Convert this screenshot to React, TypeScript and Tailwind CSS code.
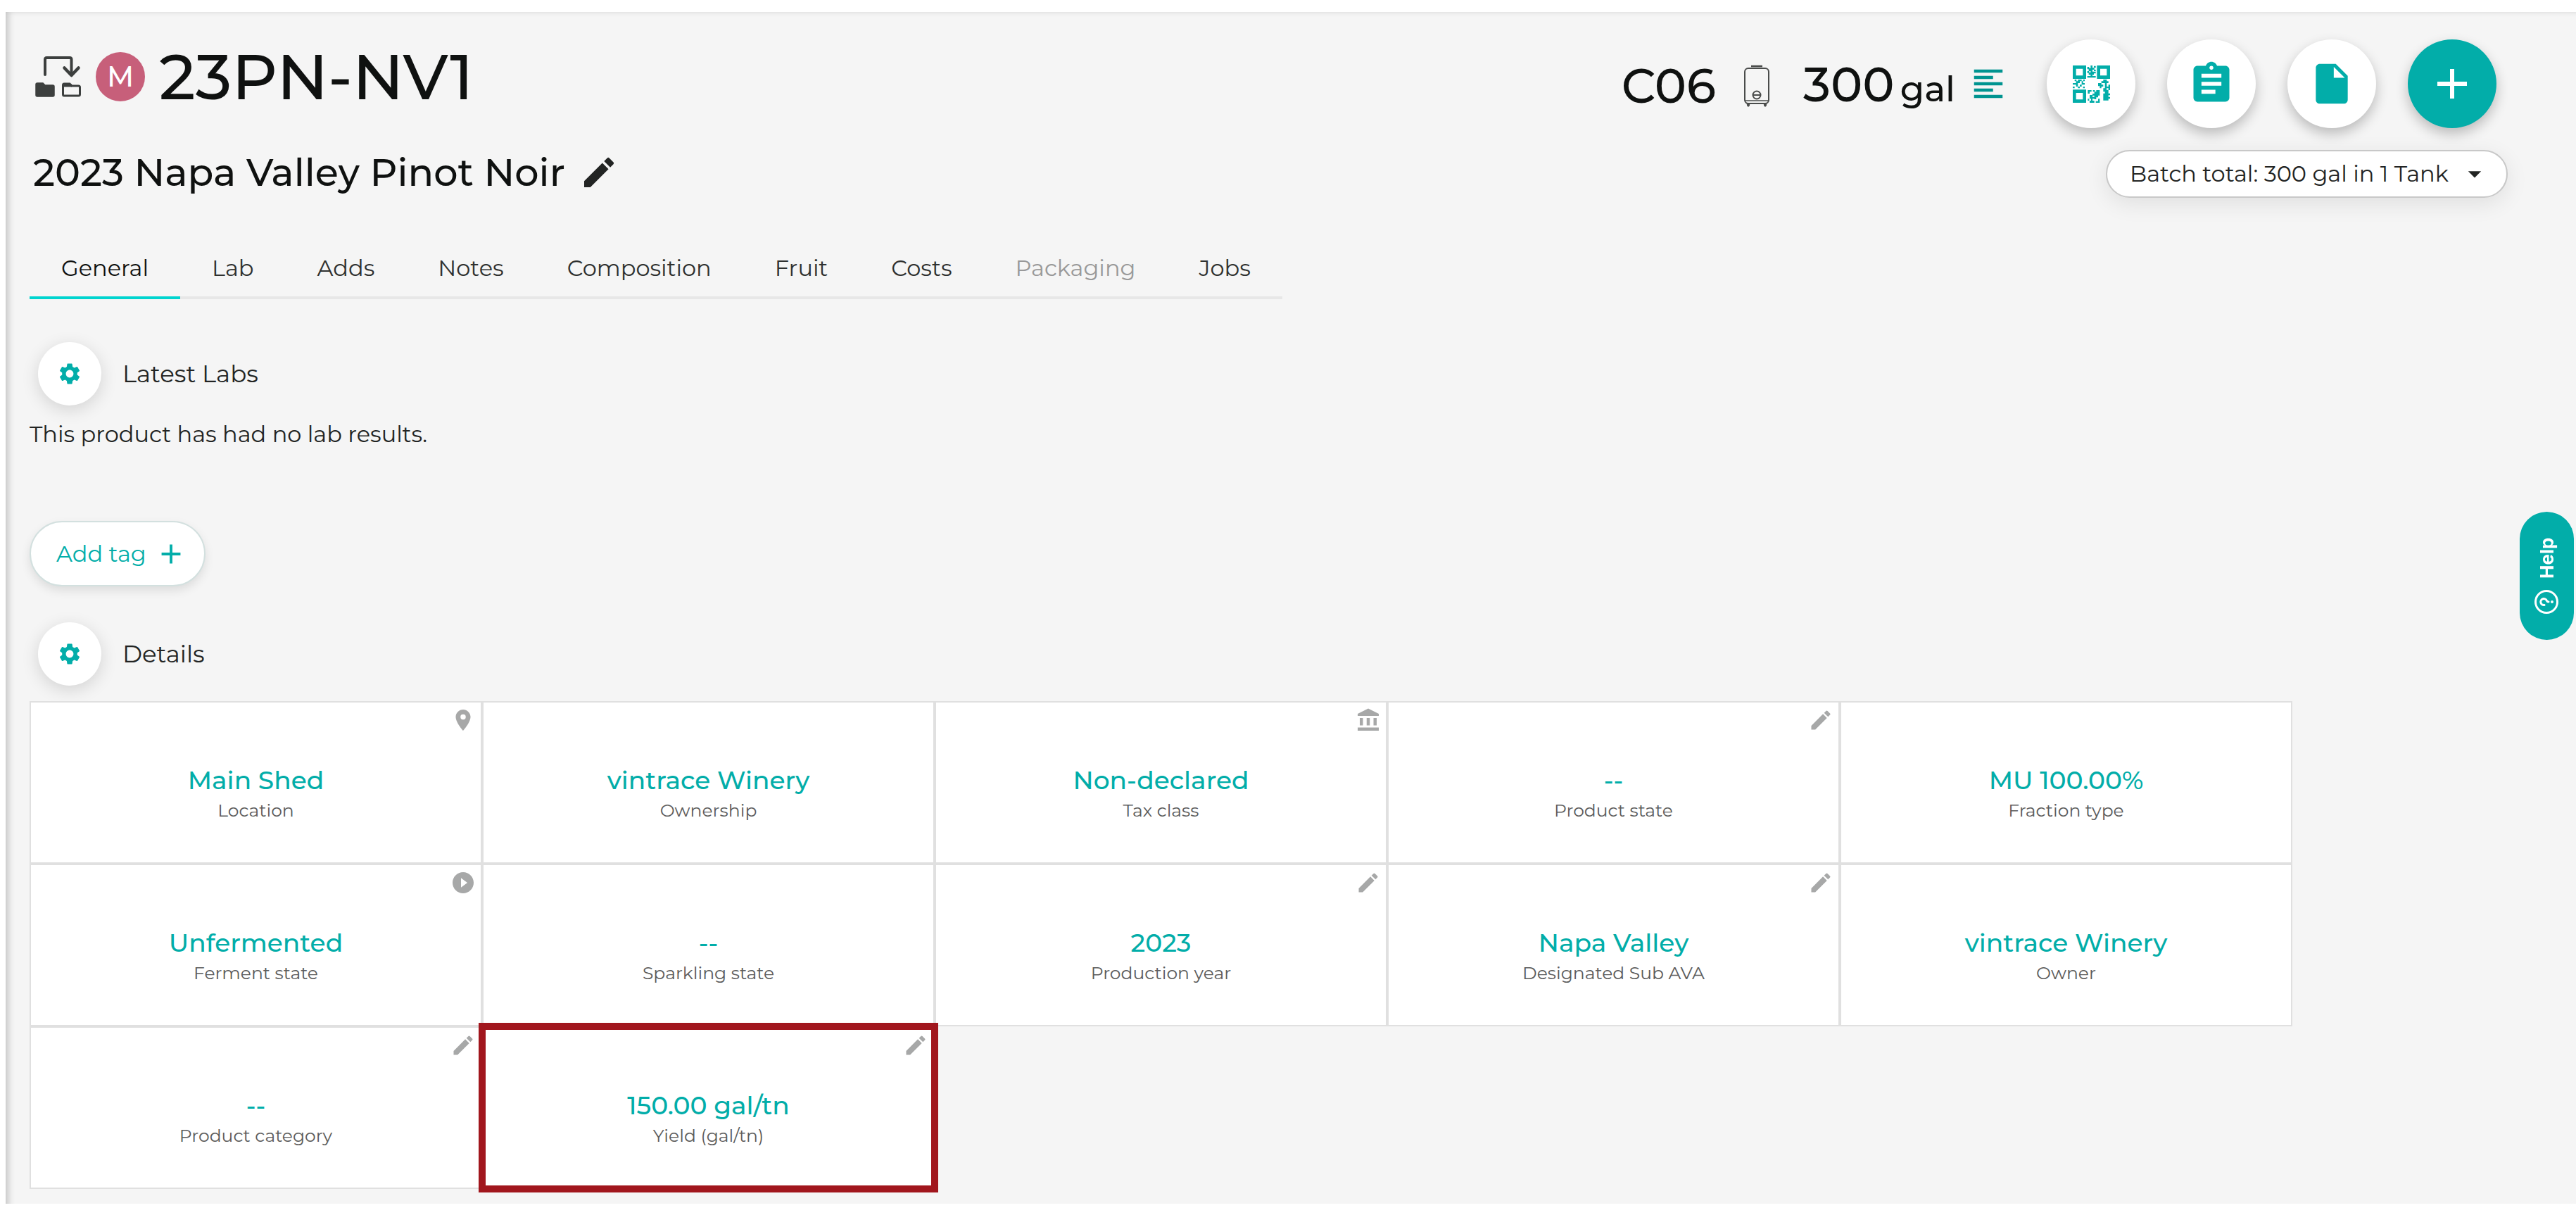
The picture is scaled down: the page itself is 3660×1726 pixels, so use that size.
import type { ReactNode } from "react";
import {
  MdAccountBalance,
  MdAdd,
  MdArrowDropDown,
  MdAssignment,
  MdEdit,
  MdFormatAlignLeft,
  MdInsertDriveFile,
  MdPlace,
  MdPlayCircleFilled,
  MdSettings,
} from "react-icons/md";

type Tile = { value: string; label: string; icon?: ReactNode; highlighted?: boolean };

const pencil = <MdEdit className="size-9" />;

const tiles: Tile[] = [
  { value: "Main Shed", label: "Location", icon: <MdPlace className="size-9" /> },
  { value: "vintrace Winery", label: "Ownership" },
  { value: "Non-declared", label: "Tax class", icon: <MdAccountBalance className="size-9" /> },
  { value: "--", label: "Product state", icon: pencil },
  { value: "MU 100.00%", label: "Fraction type" },
  { value: "Unfermented", label: "Ferment state", icon: <MdPlayCircleFilled className="size-9" /> },
  { value: "--", label: "Sparkling state" },
  { value: "2023", label: "Production year", icon: pencil },
  { value: "Napa Valley", label: "Designated Sub AVA", icon: pencil },
  { value: "vintrace Winery", label: "Owner" },
  { value: "--", label: "Product category", icon: pencil },
  { value: "150.00 gal/tn", label: "Yield (gal/tn)", icon: pencil, highlighted: true },
];

const tabs = ["General", "Lab", "Adds", "Notes", "Composition", "Fruit", "Costs", "Packaging", "Jobs"];

function TransferIcon() {
  return (
    <svg viewBox="0 0 66 60" className="h-[60px] w-[66px] shrink-0" fill="none" stroke="#3c3f3e">
      <path d="M14 27V5.500Q14 3 16.500 3H49Q51.500 3 51.500 5.500V27" strokeWidth="4" strokeLinecap="round" />
      <path d="M41.500 17.500 51.500 28 61.500 17.500" strokeWidth="4.500" strokeLinecap="round" strokeLinejoin="round" />
      <path d="M3 39H11L14 42H25Q27 42 27 44V56Q27 58 25 58H3Q1 58 1 56V41Q1 39 3 39Z" fill="#3c3f3e" strokeWidth="1.500" />
      <path d="M41 40H49L52 43H61.500Q63.500 43 63.500 45V55Q63.500 57 61.500 57H41Q39.500 57 39.500 55V42Q39.500 40 41 40Z" strokeWidth="3" />
      <path d="M39 42.500H52" strokeWidth="4" />
    </svg>
  );
}

function TankIcon() {
  return (
    <svg viewBox="0 0 36 60" className="h-[60px] w-9 shrink-0" fill="none" stroke="#4a4c4b" strokeWidth="2">
      <path d="M10 2H26" strokeWidth="2.500" />
      <rect x="1" y="5" width="34" height="50" rx="5" />
      <path d="M1 51H35" strokeWidth="1.500" />
      <path d="M4 55H8L7 59H5ZM28 55H32L31 59H29Z" fill="#4a4c4b" strokeWidth="1" />
      <circle cx="18" cy="43" r="5.500" />
      <path d="M12 43H24" />
    </svg>
  );
}

function QrIcon() {
  return (
    <svg viewBox="0 0 159 159" className="size-[53px]" fill="currentColor">
      <path fillRule="evenodd" d="M0 0H57V57H0ZM14 14V43H43V14ZM103 0H159V57H103ZM117 14V43H145V14ZM0 103H57V159H0ZM14 117V145H43V117Z" />
      <path d="M76 0H84V10H92V18H84V26H98V34H90V40H84V45H98V52H62V45H76V40H68V32H62V24H70V30H76V24H68V16H62V6H70V12H76Z" />
      <path d="M90 2H98V10H90ZM90 18H98V24H90Z" />
      <path d="M8 60H16V67H8ZM22 60H38V67H30V75H22V90H14V82H0V75H14V67H22ZM0 90H8V97H0ZM44 60H51V67H44ZM38 67H44V75H51V82H38ZM30 82H38V90H30ZM22 90H30V97H22ZM44 90H51V97H44Z" />
      <path d="M130 60H145V67H152V75H145V82H137V75H122V67H130ZM108 75H122V82H130V90H122V97H115V88H108ZM137 82H145V90H159V105H152V97H144V104H152V119H159V127H152V134H159V142H152V149H130V119H137V112H130V97H137ZM152 82H159V90H152Z" />
      <path d="M64 105H80V112H72V120H64ZM86 105H94V112H86ZM100 105H115V128H108V136H100V144H92V128H84V120H92V112H100ZM72 126H84V134H92V142H84V150H92V159H72V150H78V142H72ZM64 142H70V150H64ZM98 152H115V159H98ZM108 142H115V152H108Z" />
    </svg>
  );
}

function RoundButton({ label, primary, children }: { label: string; primary?: boolean; children: ReactNode }) {
  return (
    <button
      type="button"
      aria-label={label}
      className={
        primary
          ? "flex size-[126px] items-center justify-center rounded-full bg-[#02ada9] text-white shadow-[0_8px_18px_rgba(0,0,0,0.24)]"
          : "flex size-[126px] items-center justify-center rounded-full bg-white text-[#02ada9] shadow-[0_8px_18px_rgba(0,0,0,0.24)]"
      }
    >
      {children}
    </button>
  );
}

function SectionHeading({ title }: { title: string }) {
  return (
    <div className="ml-3 flex items-center gap-[30px]">
      <button
        type="button"
        aria-label={`${title} settings`}
        className="flex size-[90px] items-center justify-center rounded-full bg-white text-[#02ada9] shadow-[0_6px_24px_rgba(0,0,0,0.14)]"
      >
        <MdSettings className="size-9" />
      </button>
      <h2 className="text-[34px] leading-10 text-[#222423]">{title}</h2>
    </div>
  );
}

function DetailTile({ value, label, icon, highlighted }: Tile) {
  return (
    <div className="relative border-2 border-[#e0e0e0] bg-white pt-[86px] pb-[55px] text-center">
      <div className="text-[36px] leading-[48px] font-medium text-[#02ada9]">{value}</div>
      <div className="text-[25px] leading-[38px] text-[#5c5c5c]">{label}</div>
      {icon && (
        <button type="button" aria-label={`Edit ${label}`} className="absolute top-[7px] right-[7px] text-[#a7a8a8]">
          {icon}
        </button>
      )}
      {highlighted && <div className="pointer-events-none absolute -inset-[7px] z-10 border-[10px] border-[#a1161d]" />}
    </div>
  );
}

export default function App() {
  return (
    <div className="bg-white pt-[17px] pb-[15px] pl-2 font-[Montserrat,Inter,sans-serif] text-[#0f1110]">
      <main className="bg-[#f5f5f5] pt-[39px] pr-[97px] pb-[21px] pl-[34px] shadow-[inset_10px_4px_10px_-6px_rgba(0,0,0,0.2)]">
        <header className="flex items-start justify-between">
          <div>
            <div className="ml-2 flex h-[106px] items-center">
              <TransferIcon />
              <span className="ml-5 flex size-[70px] items-center justify-center rounded-full bg-[#c75f7a] text-[40px] font-medium text-white">
                M
              </span>
              <h1 className="ml-5 text-[90px] leading-[106px] font-medium">23PN-NV1</h1>
            </div>
            <div className="mt-[49px] ml-[5px] flex h-[68px] items-center gap-5">
              <p className="text-[54px] leading-[68px] font-medium">2023 Napa Valley Pinot Noir</p>
              <button type="button" aria-label="Edit name" className="text-[#222423]">
                <MdEdit className="size-14" />
              </button>
            </div>
          </div>

          <div className="flex flex-col items-end">
            <div className="mr-4 flex items-center">
              <div className="flex items-center pt-1.5 font-medium">
                <span className="text-[68px] leading-[80px]">C06</span>
                <span className="ml-10">
                  <TankIcon />
                </span>
                <span className="ml-12 flex items-baseline gap-2">
                  <span className="text-[68px] leading-[80px]">300</span>
                  <span className="text-[50px]">gal</span>
                </span>
              </div>
              <button type="button" aria-label="Show list" className="ml-5 text-[#009490]">
                <MdFormatAlignLeft className="size-[54px]" />
              </button>
              <div className="ml-14 flex gap-[45px]">
                <RoundButton label="QR code">
                  <QrIcon />
                </RoundButton>
                <RoundButton label="Tasks">
                  <MdAssignment className="size-[68px]" />
                </RoundButton>
                <RoundButton label="Documents">
                  <MdInsertDriveFile className="size-[68px]" />
                </RoundButton>
                <RoundButton label="Add" primary>
                  <MdAdd className="size-[72px]" />
                </RoundButton>
              </div>
            </div>
            <div className="relative mt-[31px]">
              <select
                aria-label="Batch total"
                className="h-[68px] appearance-none rounded-full border-2 border-[#c8c8c8] bg-white pr-[82px] pl-8 text-[32px] text-[#222423] shadow-[0_8px_32px_rgba(0,0,0,0.09)]"
              >
                <option>Batch total: 300 gal in 1 Tank</option>
              </select>
              <MdArrowDropDown className="pointer-events-none absolute top-3 right-[25px] size-11 text-[#222423]" />
            </div>
          </div>
        </header>

        <nav role="tablist" className="mt-[60px] flex w-fit border-b-4 border-[#e7e7e7]">
          {tabs.map((tab) => (
            <button
              key={tab}
              type="button"
              role="tab"
              aria-selected={tab === "General"}
              disabled={tab === "Packaging"}
              className="-mb-1 border-b-4 border-transparent px-[45px] text-[32px] leading-[80px] text-[#2f3130] disabled:text-[#999999] aria-selected:border-[#00d4cf] aria-selected:text-[#0f1110]"
            >
              {tab}
            </button>
          ))}
        </nav>

        <section className="mt-[61px]">
          <SectionHeading title="Latest Labs" />
          <p className="mt-[21px] text-[32px] leading-10 text-[#222423]">This product has had no lab results.</p>
        </section>

        <button
          type="button"
          className="mt-[103px] flex h-[93px] items-center gap-3 rounded-full border-2 border-[#d3e0df] bg-white pr-6 pl-9 text-[32px] text-[#02ada9] shadow-[0_6px_14px_rgba(0,0,0,0.1)]"
        >
          Add tag
          <MdAdd className="size-[46px]" />
        </button>

        <section className="mt-[51px]">
          <SectionHeading title="Details" />
          <div className="mt-[22px] mr-[306px] grid grid-cols-5">
            {tiles.map((tile) => (
              <DetailTile key={tile.label} {...tile} />
            ))}
          </div>
        </section>
      </main>

      <button
        type="button"
        className="fixed top-[727px] right-[3px] flex h-[182px] w-[77px] rotate-180 items-center justify-center gap-4 rounded-full bg-[#02ada9] font-[Inter,sans-serif] text-[26px] font-bold text-white [writing-mode:vertical-rl]"
      >
        <svg viewBox="0 0 34 34" className="size-[34px] rotate-90" fill="none" stroke="currentColor" strokeLinecap="round">
          <circle cx="17" cy="17" r="15.500" strokeWidth="3" />
          <path d="M12.500 14A4.500 4.500 0 1 1 18.500 17.500Q17 18.300 17 20" strokeWidth="3" />
          <circle cx="17" cy="25" r="1.200" fill="currentColor" strokeWidth="1.500" />
        </svg>
        Help
      </button>
    </div>
  );
}
